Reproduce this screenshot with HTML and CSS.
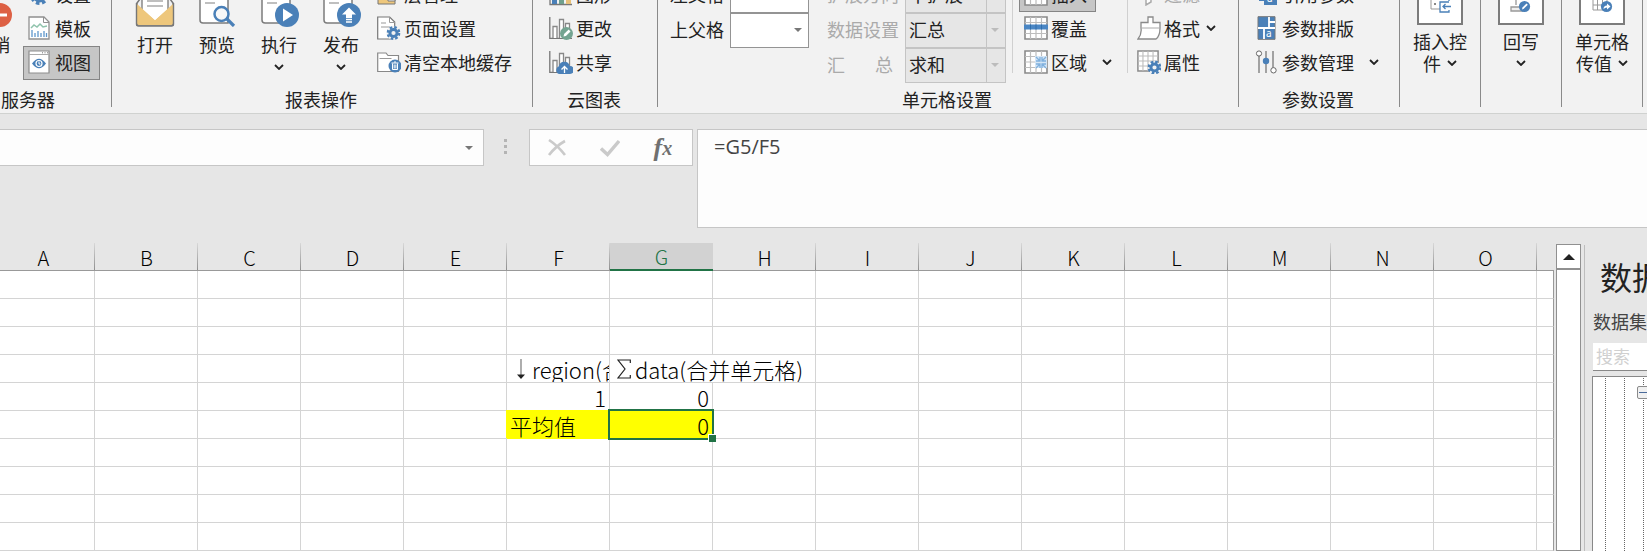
FILE: index.html
```html
<!DOCTYPE html>
<html lang="zh-CN">
<head>
<meta charset="utf-8">
<title>报表设计器</title>
<link rel="stylesheet" href="styles.css">
</head>
<body>
<svg class="defs" aria-hidden="true">
  <symbol id="chev" viewBox="0 0 10 6"><path d="M1 1l4 4 4-4" fill="none" stroke="#222" stroke-width="1.800"/></symbol>
  <symbol id="gear" viewBox="0 0 14 14"><circle cx="7" cy="7" r="3.6" fill="#f2f2f2" stroke="#4a80b8" stroke-width="3"/><circle cx="7" cy="7" r="5.8" fill="none" stroke="#4a80b8" stroke-width="2.4" stroke-dasharray="2.6 1.955"/></symbol>
  <symbol id="grid" viewBox="0 0 24 24"><path d="M1 1h22v22H1z" fill="#fff" stroke="#8a8a8a" stroke-width="1.6"/><path d="M6.500 1v22M12 1v22M17.500 1v22M1 6.500h22M1 12h22M1 17.500h22" stroke="#bdbdbd" stroke-width="1.200"/></symbol>
  <symbol id="bars" viewBox="0 0 24 24"><path d="M.8 1v21.400H23" fill="none" stroke="#777" stroke-width="1.300"/><path d="M4 22V10.500h4V22M10.500 22V3.500h4V22M16.500 22V7.500h4V22" fill="#fff" stroke="#888" stroke-width="1.300"/></symbol>
  <symbol id="sheet" viewBox="0 0 40 40"><path d="M3 2h28v34H6q-3 0-3-3z" fill="#fff" stroke="#7c7c7c" stroke-width="1.500"/><path d="M8 16h10" stroke="#aaa" stroke-width="1.500"/></symbol>
</svg>

<header class="ribbon">
  <section class="group g-server">
    <div class="tools">
      <button class="big"><svg class="ico40" viewBox="0 0 40 40"><circle cx="28" cy="28" r="12" fill="#dd6044"/><path d="M20 28h15" stroke="#fff" stroke-width="3"/></svg><span>注销</span></button>
      <div class="stack">
        <button class="small"><svg class="ico" viewBox="0 0 24 24"><use href="#gear" x="2" y="4" width="19" height="19"/></svg>设置</button>
        <button class="small"><svg class="ico" viewBox="0 0 24 24"><path d="M1 1h15l5 5v17H1z" fill="#fff" stroke="#909090" stroke-width="1.300"/><path d="M15.500 1v5.500H21" fill="none" stroke="#909090"/><path d="M3 12l3-3 3 2 3-3 3 3 4-1" fill="none" stroke="#8fc3ac" stroke-width="1.500"/><path d="M4 21v-7M7 21v-4M10 21v-6M13 21v-4M16 21v-6M18.500 21v-4" stroke="#5f97cc" stroke-width="1.300"/></svg>模板</button>
        <button class="small on"><svg class="ico" viewBox="0 0 24 24"><path d="M1 1h20v22H1z" fill="#fff" stroke="#8d8d8d" stroke-width="1.200"/><path d="M1 4.500h20" stroke="#aaa"/><path d="M14 2.800h1M16.500 2.800h1M19 2.800h1" stroke="#777"/><path d="M4 13.500q7-9.500 14 0q-7 9.500-14 0z" fill="#4a80b8"/><circle cx="11" cy="13.500" r="3" fill="#4a80b8" stroke="#fff" stroke-width="1.200"/><path d="M11 11.500v2.500h1.500" fill="none" stroke="#fff"/></svg>视图</button>
      </div>
    </div>
    <h2>服务器</h2>
  </section>

  <section class="group g-report">
    <div class="tools">
      <button class="big"><svg class="ico40" viewBox="0 0 40 40"><path d="M2 16L8 8h24l6 8v22H2z" fill="#f2f2f2" stroke="#777" stroke-width="1.500"/><path d="M7 6h26v20L20 35 7 26z" fill="#fff" stroke="#777" stroke-width="1.300"/><path d="M2 17l18 16 18-16v19q0 2-2 2H4q-2 0-2-2z" fill="#eec77c"/><path d="M8 10h24v12L20 33 8 22z" fill="#fff"/><path d="M12 14h16M12 19h16" stroke="#aaa" stroke-width="1.500"/><path d="M1.500 16v21q0 2 2 2h33q2 0 2-2V16" fill="none" stroke="#777" stroke-width="1.400"/></svg><span>打开</span></button>
      <button class="big"><svg class="ico40" viewBox="0 0 40 40"><use href="#sheet"/><circle cx="24.500" cy="27" r="7" fill="#f8f8f8" stroke="#4a80b8" stroke-width="2.500"/><path d="M30 32l7 7" stroke="#4a80b8" stroke-width="3.200"/></svg><span>预览</span></button>
      <button class="big"><svg class="ico40" viewBox="0 0 40 40"><use href="#sheet"/><circle cx="28" cy="28" r="12" fill="#4a80b8"/><path d="M24 21.500v13l10-6.500z" fill="#fff"/></svg><span>执行</span><svg class="chev"><use href="#chev"/></svg></button>
      <button class="big"><svg class="ico40" viewBox="0 0 40 40"><use href="#sheet"/><circle cx="28" cy="28" r="12" fill="#4a80b8"/><path d="M28 20.500l7 7h-4v3.500h-6v-3.500h-4z" fill="#fff"/><path d="M25 32.500h6M25 35h6" stroke="#fff" stroke-width="1.300"/></svg><span>发布</span><svg class="chev"><use href="#chev"/></svg></button>
      <div class="stack">
        <button class="small"><svg class="ico" viewBox="0 0 24 24"><path d="M1 15h3V4h14v18H1z" fill="#eec77c" stroke="#777"/><path d="M11 2h7v17h-7z" fill="#fff" stroke="#777"/></svg>层管理</button>
        <button class="small"><svg class="ico" viewBox="0 0 24 24"><path d="M.7 1h12l5 5v17h-17z" fill="#fff" stroke="#777" stroke-width="1.200"/><path d="M12.500 1v5.500H18M4 7h5M4 11h9" fill="none" stroke="#999"/><circle cx="16.500" cy="17" r="7" fill="#f2f2f2"/><use href="#gear" x="9.500" y="10" width="14" height="14"/></svg>页面设置</button>
        <button class="small"><svg class="ico" viewBox="0 0 24 24"><path d="M.7 21.500V3H9l2 2.500h10.500v16z" fill="#fff" stroke="#888" stroke-width="1.200"/><path d="M2.500 8.500h12" stroke="#999"/><circle cx="18" cy="16" r="6.500" fill="#4a80b8"/><path d="M14.500 13h7M17 12h2M15.500 13.500v6h5v-6M17.200 14.500v4M18.900 14.500v4" fill="none" stroke="#fff"/></svg>清空本地缓存</button>
      </div>
    </div>
    <h2>报表操作</h2>
  </section>

  <section class="group g-chart">
    <div class="tools">
      <div class="stack">
        <button class="small"><svg class="ico" viewBox="0 0 24 24"><path d="M1 1v21.500h22" fill="none" stroke="#777" stroke-width="1.300"/><path d="M3 10h5v12H3z" fill="#4a80b8"/><path d="M10 5h5v17h-5z" fill="#6fa08d"/><path d="M17 8h5v14h-5z" fill="#e7c078"/></svg>图形</button>
        <button class="small"><svg class="ico" viewBox="0 0 24 24"><use href="#bars"/><circle cx="17.500" cy="17.500" r="6.500" fill="#74a491"/><path d="M14.500 20.500l.6-2.500 4.600-4.400 1.800 1.800-4.600 4.500z" fill="#fff"/></svg>更改</button>
        <button class="small"><svg class="ico" viewBox="0 0 24 24"><use href="#bars"/><path d="M10.500 24a4 4 0 0 1-.6-7.700 5.500 5.500 0 0 1 10.800-.3A4 4 0 0 1 21 24z" fill="#4a80b8"/><path d="M15.500 23v-6M12.500 19.500l3-3 3 3" fill="none" stroke="#fff" stroke-width="1.300"/></svg>共享</button>
      </div>
    </div>
    <h2>云图表</h2>
  </section>

  <section class="group g-cell">
    <div class="tools">
      <div class="fields parents">
        <label for="leftParent">左父格</label>
        <span class="combo"><select id="leftParent"><option></option></select><svg class="tri" viewBox="0 0 8 4"><path d="M0 0h8L4 4z"/></svg></span>
        <label for="topParent">上父格</label>
        <span class="combo"><select id="topParent"><option></option></select><svg class="tri" viewBox="0 0 8 4"><path d="M0 0h8L4 4z"/></svg></span>
      </div>
      <div class="fields off">
        <label for="expand">扩展方向</label>
        <span class="combo"><select id="expand" disabled><option>不扩展</option></select><svg class="tri" viewBox="0 0 8 4"><path d="M0 0h8L4 4z"/></svg></span>
        <label for="dataset">数据设置</label>
        <span class="combo"><select id="dataset" disabled><option>汇总</option></select><svg class="tri" viewBox="0 0 8 4"><path d="M0 0h8L4 4z"/></svg></span>
        <label class="spread" for="total"><span>汇</span><span>总</span></label>
        <span class="combo"><select id="total" disabled><option>求和</option></select><svg class="tri" viewBox="0 0 8 4"><path d="M0 0h8L4 4z"/></svg></span>
      </div>
      <div class="stack ruled">
        <button class="small on"><svg class="ico" viewBox="0 0 24 24"><use href="#grid"/></svg>插入</button>
        <button class="small"><svg class="ico" viewBox="0 0 24 24"><use href="#grid"/><path d="M0 8.500h24v5H0z" fill="#4a86c4"/><path d="M6.500 8.500v5M12 8.500v5M17.500 8.500v5" stroke="#2f6fae"/></svg>覆盖</button>
        <button class="small"><svg class="ico" viewBox="0 0 24 24"><use href="#grid"/><path d="M11 6h12v12H11z" fill="#d4e5f5"/><path d="M12 7l4 4M22 7l-4 4M12 18l4-4M22 18l-4-4M12 11h4V7M22 11h-4V7M12 14h4v4M22 14h-4v4" fill="none" stroke="#7fb0dd" stroke-width="1.300"/></svg>区域<svg class="chev far"><use href="#chev"/></svg></button>
      </div>
      <div class="stack ruled">
        <button class="small dim"><svg class="ico" viewBox="0 0 24 24"><path d="M2 3h18l-6 9v8l-5 3V12z" fill="#fff" stroke="#aaa" stroke-width="1.500"/></svg>过滤</button>
        <button class="small"><svg class="ico" viewBox="0 0 24 24"><path d="M4 12V6.500h7V1h5v5.500h7V12q0 8-4 11H1q4-5 3-11z" fill="#fff" stroke="#8a8a8a" stroke-width="1.300"/><path d="M4 12h19" stroke="#aaa"/></svg>格式<svg class="chev"><use href="#chev"/></svg></button>
        <button class="small"><svg class="ico" viewBox="0 0 24 24"><use href="#grid" width="22" height="22"/><circle cx="17.500" cy="17.500" r="6" fill="#fff"/><use href="#gear" x="10.500" y="10.500" width="14" height="14"/></svg>属性</button>
      </div>
    </div>
    <h2>单元格设置</h2>
  </section>

  <section class="group g-param">
    <div class="tools">
      <div class="stack">
        <button class="small"><svg class="ico" viewBox="0 0 24 24"><path d="M4 2h13v7h5v14H9v-4H4z" fill="#4a80b8"/><text x="12" y="20" class="glyph">a</text></svg>引用参数</button>
        <button class="small"><svg class="ico" viewBox="0 0 24 24"><path d="M3 .7h17v22.600H3z" fill="#4a80b8" stroke="#777"/><path d="M3 12h17M14 1v11M14 6h6M9 12v11" stroke="#fff" stroke-width="1.800"/><text x="11" y="21" class="glyph">a</text></svg>参数排版</button>
        <button class="small"><svg class="ico" viewBox="0 0 24 24"><path d="M4 5v18M11 1v22M18 1v18" stroke="#777" stroke-width="1.300"/><circle cx="4" cy="3.500" r="2.600" fill="#fff" stroke="#666"/><circle cx="11" cy="11" r="3.200" fill="#4a80b8"/><circle cx="18.500" cy="20.300" r="2.700" fill="#fff" stroke="#666"/></svg>参数管理<svg class="chev far"><use href="#chev"/></svg></button>
      </div>
    </div>
    <h2>参数设置</h2>
  </section>

  <section class="group g-tile">
    <button class="tile"><svg class="ico46" viewBox="0 0 46 46"><path d="M1 1h44v44H1z" fill="#fff" stroke="#7c7c7c" stroke-width="2"/><path d="M23 20h-9v10h9" fill="none" stroke="#999"/><path d="M17 24h2v2h-2z" fill="#888"/><path d="M32 22v-3M32 31v2h-9v-10h9M26 27.500h8M28.500 25L26 27.500l2.500 2.500" fill="none" stroke="#4a80b8" stroke-width="1.300"/></svg><span class="first">插入控</span><span class="line">件<svg class="chev"><use href="#chev"/></svg></span></button>
  </section>
  <section class="group g-tile">
    <button class="tile"><svg class="ico46" viewBox="0 0 46 46"><path d="M1 1h44v44H1z" fill="#fff" stroke="#7c7c7c" stroke-width="2"/><path d="M18 14v12M13 28h12v4H13z" fill="#eee" stroke="#999" stroke-width="1.300"/><circle cx="26.500" cy="27.500" r="5.600" fill="#4a80b8"/><path d="M24 30.500l.5-2 4-4 1.300 1.300-4 4z" fill="#fff"/></svg><span class="first">回写</span><span class="line"><svg class="chev"><use href="#chev"/></svg></span></button>
  </section>
  <section class="group g-tile">
    <button class="tile"><svg class="ico46" viewBox="0 0 46 46"><path d="M1 1h44v44H1z" fill="#fff" stroke="#7c7c7c" stroke-width="2"/><path d="M14 15h14v16H14zM14 20.500h14M14 26h14M18.500 15v16M23.500 15v16" fill="none" stroke="#999"/><circle cx="27.500" cy="27.500" r="5.600" fill="#4a80b8"/><path d="M24.500 30q0-3.500 3.500-3.500v-2l3.500 3-3.500 3v-2q-2 0-3.500 1.500z" fill="#fff"/></svg><span class="first">单元格</span><span class="line">传值<svg class="chev"><use href="#chev"/></svg></span></button>
  </section>
</header>

<div class="formula">
  <div class="namebox"><input aria-label="名称框"><button aria-label="名称列表"><svg class="tri" viewBox="0 0 8 4"><path d="M0 0h8L4 4z"/></svg></button></div>
  <svg class="grip" viewBox="0 0 3 15"><path d="M0 0h3v3H0zM0 6h3v3H0zM0 12h3v3H0z" fill="#b4b4b4"/></svg>
  <div class="actions">
    <button aria-label="取消"><svg width="20" height="18" viewBox="0 0 20 18"><path d="M2 1q9 6 16 15M18 2Q9 7 2 16" fill="none" stroke="#cacaca" stroke-width="2.600"/></svg></button>
    <button aria-label="输入"><svg width="20" height="18" viewBox="0 0 20 18"><path d="M1 9.500l6.500 6L19 2" fill="none" stroke="#cacaca" stroke-width="3.400"/></svg></button>
    <button class="fx" aria-label="插入函数"><i>f</i><i class="x">x</i></button>
  </div>
  <textarea aria-label="编辑栏">=G5/F5</textarea>
</div>

<main class="work">
  <div class="sheet">
    <table>
      <thead><tr><th>A</th><th>B</th><th>C</th><th>D</th><th>E</th><th>F</th><th class="cur">G</th><th>H</th><th>I</th><th>J</th><th>K</th><th>L</th><th>M</th><th>N</th><th>O</th><th class="rest"></th></tr></thead>
      <tbody>
        <tr><td></td><td></td><td></td><td></td><td></td><td></td><td></td><td></td><td></td><td></td><td></td><td></td><td></td><td></td><td></td><td></td></tr>
        <tr><td></td><td></td><td></td><td></td><td></td><td></td><td></td><td></td><td></td><td></td><td></td><td></td><td></td><td></td><td></td><td></td></tr>
        <tr><td></td><td></td><td></td><td></td><td></td><td></td><td></td><td></td><td></td><td></td><td></td><td></td><td></td><td></td><td></td><td></td></tr>
        <tr><td></td><td></td><td></td><td></td><td></td><td><div class="tag"><svg width="8" height="20" viewBox="0 0 8 20"><path d="M4 0v17" stroke="#777" stroke-width="1.200"/><path d="M0 15.500h8L4 20z" fill="#222"/></svg>region(合并单元格)</div></td><td colspan="2"><div class="tag sum"><svg width="14" height="20" viewBox="0 0 14 20"><path d="M13.300 4V1H1l7 9-7 9h12.300v-3" fill="none" stroke="#222" stroke-width="1.200"/></svg>data(合并单元格)</div></td><td></td><td></td><td></td><td></td><td></td><td></td><td></td><td></td></tr>
        <tr><td></td><td></td><td></td><td></td><td></td><td class="num">1</td><td class="num">0</td><td></td><td></td><td></td><td></td><td></td><td></td><td></td><td></td><td></td></tr>
        <tr><td></td><td></td><td></td><td></td><td></td><td class="hl">平均值</td><td class="num hl picked">0</td><td></td><td></td><td></td><td></td><td></td><td></td><td></td><td></td><td></td></tr>
        <tr><td></td><td></td><td></td><td></td><td></td><td></td><td></td><td></td><td></td><td></td><td></td><td></td><td></td><td></td><td></td><td></td></tr>
        <tr><td></td><td></td><td></td><td></td><td></td><td></td><td></td><td></td><td></td><td></td><td></td><td></td><td></td><td></td><td></td><td></td></tr>
        <tr><td></td><td></td><td></td><td></td><td></td><td></td><td></td><td></td><td></td><td></td><td></td><td></td><td></td><td></td><td></td><td></td></tr>
        <tr><td></td><td></td><td></td><td></td><td></td><td></td><td></td><td></td><td></td><td></td><td></td><td></td><td></td><td></td><td></td><td></td></tr>
      </tbody>
    </table>
  </div>
  <div class="scroll"><button aria-label="向上滚动"><svg width="12" height="6" viewBox="0 0 12 6"><path d="M0 6l6-6 6 6z" fill="#222"/></svg></button></div>
  <aside class="side">
    <h1>数据集</h1>
    <label for="find">数据集</label>
    <input id="find" placeholder="搜索">
    <div class="tree"><i></i><i></i><i></i><button aria-label="折叠"></button></div>
  </aside>
</main>
</body>
</html>
```
FILE: styles.css
```css
* { box-sizing: border-box; }
html, body { height: 100%; }
body {
  margin: 0;
  display: flex;
  flex-direction: column;
  overflow: hidden;
  background: #e6e6e6;
  color: #222;
  font: 18px/22px "Noto Sans CJK SC", sans-serif;
}
button, input, select, textarea { font: inherit; color: inherit; }
button { display: flex; align-items: center; padding: 0; border: 0; background: none; white-space: nowrap; }
h1, h2 { margin: 0; font-weight: 400; }
.defs { position: absolute; width: 0; height: 0; }

/* Ribbon, scrolled so that its first row is partly out of view */
.ribbon {
  display: flex;
  flex: none;
  margin: -22px 0 0 -53px;
  background: #f2f2f2;
  border-bottom: 1px solid #d0d2d0;
}
.group {
  flex: none;
  background: linear-gradient(#8a8a8a, #8a8a8a) right top / 1px calc(100% - 6px) no-repeat;
}
.g-server { width: 165px; }
.g-report { width: 421px; padding-left: 12px; }
.g-chart { width: 125px; padding-left: 11px; }
.g-cell { width: 581px; padding-left: 12px; }
.g-param { width: 161px; padding-left: 11px; }
.g-tile { width: 81px; }
.g-report h2, .g-cell h2 { margin-left: -12px; }
.g-chart h2, .g-param h2 { margin-left: -11px; }
.tools { display: flex; height: 109px; }
.group h2 { padding: 0 3px 2px 0; font-size: 18px; line-height: 24px; text-align: center; }

.big { flex-direction: column; width: 62px; padding-top: 9px; }
.big span { margin: 6px 0 9px; }
.g-server .big { width: 76px; padding-left: 14px; }
.ico { width: 24px; height: 24px; flex: none; }
.ico40 { width: 40px; height: 40px; flex: none; }
.ico46 { width: 46px; height: 46px; flex: none; }
.chev { width: 10px; height: 6px; flex: none; }
.small { height: 34px; gap: 3px; padding: 0 8px 2px 4px; border: 1px solid transparent; }
.small .chev { margin-left: 3px; }
.small .far { margin-left: 12px; }
.small.on { background: #c6c6c6; border-color: #858585; }
.small.dim { color: #aaa; }
.glyph { font: 10px "Noto Sans", sans-serif; fill: #fff; }
.stack { display: flex; flex-direction: column; align-items: flex-start; }
.ruled { padding-left: 7px; background: linear-gradient(#d0d0d0, #d0d0d0) left top / 1px 95px no-repeat; }
.ruled + .ruled { margin-left: 6px; padding-left: 5px; }

.fields { display: grid; grid-auto-rows: 35px; align-content: start; align-items: center; }
.fields label { padding-bottom: 3px; }
.parents { grid-template-columns: 60px 79px; margin-right: 18px; }
.off { grid-template-columns: 78px 101px; margin-right: 6px; color: #aaa; }
.off .spread { display: flex; justify-content: space-between; padding-right: 12px; }
.combo { position: relative; height: 35px; }
.combo select {
  width: 100%;
  height: 100%;
  padding: 0 22px 3px 3px;
  appearance: none;
  background: #fff;
  border: 1px solid #949494;
  border-radius: 0;
}
.combo select:disabled {
  background: linear-gradient(#c4c4c4, #c4c4c4) right 18px top / 1px 100% no-repeat #e6e6e6;
  border-color: #c4c4c4;
  color: #222;
  opacity: 1;
}
.tri { width: 8px; height: 4px; fill: #777; }
.combo .tri { position: absolute; right: 7px; top: 15px; }
.off .tri { fill: #bcbcbc; }

.tile { flex-direction: column; width: 80px; padding-top: 1px; }
.tile .first { margin-top: 5px; }
.tile .line { display: flex; align-items: center; gap: 6px; height: 22px; }

/* Formula bar */
.formula { display: flex; flex: none; align-items: flex-start; padding-top: 15px; height: 129px; }
.namebox { display: flex; flex: none; width: 484px; height: 37px; background: #fdfdfd; border: 1px solid #c6c6c6; border-left: 0; }
.namebox input { flex: 1; border: 0; background: none; outline: 0; }
.namebox button { padding: 0 10px; }
.grip { width: 3px; height: 15px; margin: 10px 21px 0 20px; }
.actions { display: flex; flex: none; justify-content: space-around; width: 164px; height: 37px; margin: 0 4px 0 1px; padding-right: 3px; background: #fdfdfd; border: 1px solid #c6c6c6; }
.fx { font: bold italic 26px/26px "Liberation Serif", serif; color: #707070; }
.fx .x { font-size: 20px; align-self: flex-end; padding-bottom: 4px; }
.formula textarea {
  flex: 1;
  height: 99px;
  padding: 4px 16px;
  font: 20px/26px "Open Sans", sans-serif;
  color: #444;
  background: #fdfdfd;
  border: 1px solid #c6c6c6;
  border-right: 0;
  outline: 0;
  resize: none;
}

/* Sheet */
.work { display: flex; flex: 1; min-height: 0; }
.sheet { flex: 1; min-width: 0; overflow: hidden; margin-right: 2px; }
table { width: calc(100% + 8px); margin-left: -8px; table-layout: fixed; border-collapse: separate; border-spacing: 0; font-size: 22px; font-weight: 300; color: #000; }
th, td { height: 28px; padding: 0; line-height: 26px; white-space: nowrap; }
th {
  width: 103px;
  padding-top: 2px;
  font-size: 20px;
  line-height: 25px;
  font-weight: 300;
  border-bottom: 1px solid #999;
  background: linear-gradient(#d8d8d8, #8f8f8f) right top / 1px 100% no-repeat;
}
th.cur { line-height: 24px; color: #217346; background: #d2d2d2; border-bottom: 2px solid #217346; }
th.rest { width: auto; background: none; }
td { background: #fff; border-right: 1px solid #d4d4d4; border-bottom: 1px solid #d4d4d4; }
td:last-child { border-right-color: #999; }
.num { text-align: right; padding-right: 3px; }
.hl { position: relative; padding-left: 3px; background: #ff0; border-color: #ff0; box-shadow: -1px -1px 0 #ff0; }
.tag { display: flex; align-items: center; gap: 7px; height: 27px; padding-left: 10px; overflow: hidden; }
.tag svg { flex: none; }
.sum { gap: 4px; padding-left: 7px; }
.picked::before { content: ""; position: absolute; inset: -2px; border: 2px solid #217346; }
.picked::after { content: ""; position: absolute; right: -4px; bottom: -4px; width: 7px; height: 7px; background: #217346; border: 1px solid #fff; border-width: 1px 0 0 1px; }

.scroll { flex: none; width: 25px; margin-top: 1px; background: #fff; border: 1px solid #909090; }
.scroll button { justify-content: center; width: 100%; height: 25px; border-bottom: 2px solid #909090; }
.side { flex: none; display: flex; flex-direction: column; width: 63px; margin: 2px 0 0 3px; padding-left: 7px; border-left: 1px solid #bdbdbd; white-space: nowrap; overflow: hidden; }
.side h1 { padding-left: 8px; font-size: 32px; line-height: 62px; font-weight: 400; }
.side label { padding-left: 1px; line-height: 28px; color: #444; }
.side input { height: 28px; margin: 8px 0 5px 1px; padding: 0 3px 2px; font-size: 17px; width: 180px; border: 0; border-bottom: 1px solid #888; background: #fff; outline: 0; }
.side input::placeholder { color: #d0d0d0; opacity: 1; }
.tree { position: relative; flex: 1; display: flex; gap: 18px; padding: 1px 0 0 12px; background: #fff; border: 1px solid #888; border-width: 1px 0 0 1px; }
.tree i { flex: none; border-left: 1px dotted #666; }
.tree button { position: absolute; left: 44px; top: 9px; width: 13px; height: 13px; border: 1px solid #8a8a8a; border-radius: 2px; background: linear-gradient(#4a6a9a, #4a6a9a) center / 9px 1px no-repeat #f0f0f0; }
```
